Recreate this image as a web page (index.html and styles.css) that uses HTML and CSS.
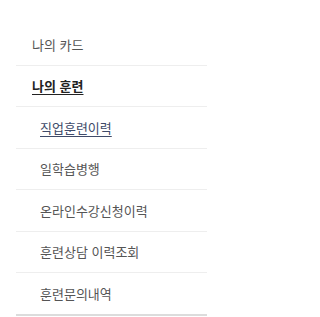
FILE: index.html
```html
<!DOCTYPE html>
<html lang="ko">
<head>
<meta charset="utf-8">
<link rel="stylesheet" href="styles.css">
</head>
<body>
<nav class="side">
  <ul class="menu">
    <li class="item"><a class="link">나의 카드</a></li>
    <li class="item"><a class="link active">나의 훈련</a></li>
    <li class="item sub"><a class="link current">직업훈련이력</a></li>
    <li class="item sub"><a class="link">일학습병행</a></li>
    <li class="item sub"><a class="link">온라인수강신청이력</a></li>
    <li class="item sub"><a class="link">훈련상담 이력조회</a></li>
    <li class="item sub last"><a class="link">훈련문의내역</a></li>
  </ul>
</nav>
</body>
</html>
```
FILE: styles.css
```css
html, body {
  margin: 0;
  padding: 0;
  background: #fff;
}
body {
  font-family: "Noto Sans CJK KR", "Noto Sans", sans-serif;
  font-size: 13px;
  color: #555;
}
.side {
  padding: 24px 0 0 16px;
  width: 191px;
}
.menu {
  list-style: none;
  margin: 0;
  padding: 0;
}
.item {
  box-sizing: border-box;
  height: 41.5px;
  border-bottom: 1px solid #eeeeee;
  display: flex;
  align-items: center;
  padding-left: 16px;
}
.item.sub {
  padding-left: 24px;
}
.item.last {
  height: 43px;
  border-bottom: 2px solid #dcdcdc;
}
.link {
  color: #555;
  text-decoration: none;
  line-height: 1;
}
.link.active {
  color: #222;
  font-weight: bold;
  text-decoration: underline;
  text-underline-offset: 3px;
}
.link.current {
  color: #404b69;
  text-decoration: underline;
  text-underline-offset: 3px;
}
```
